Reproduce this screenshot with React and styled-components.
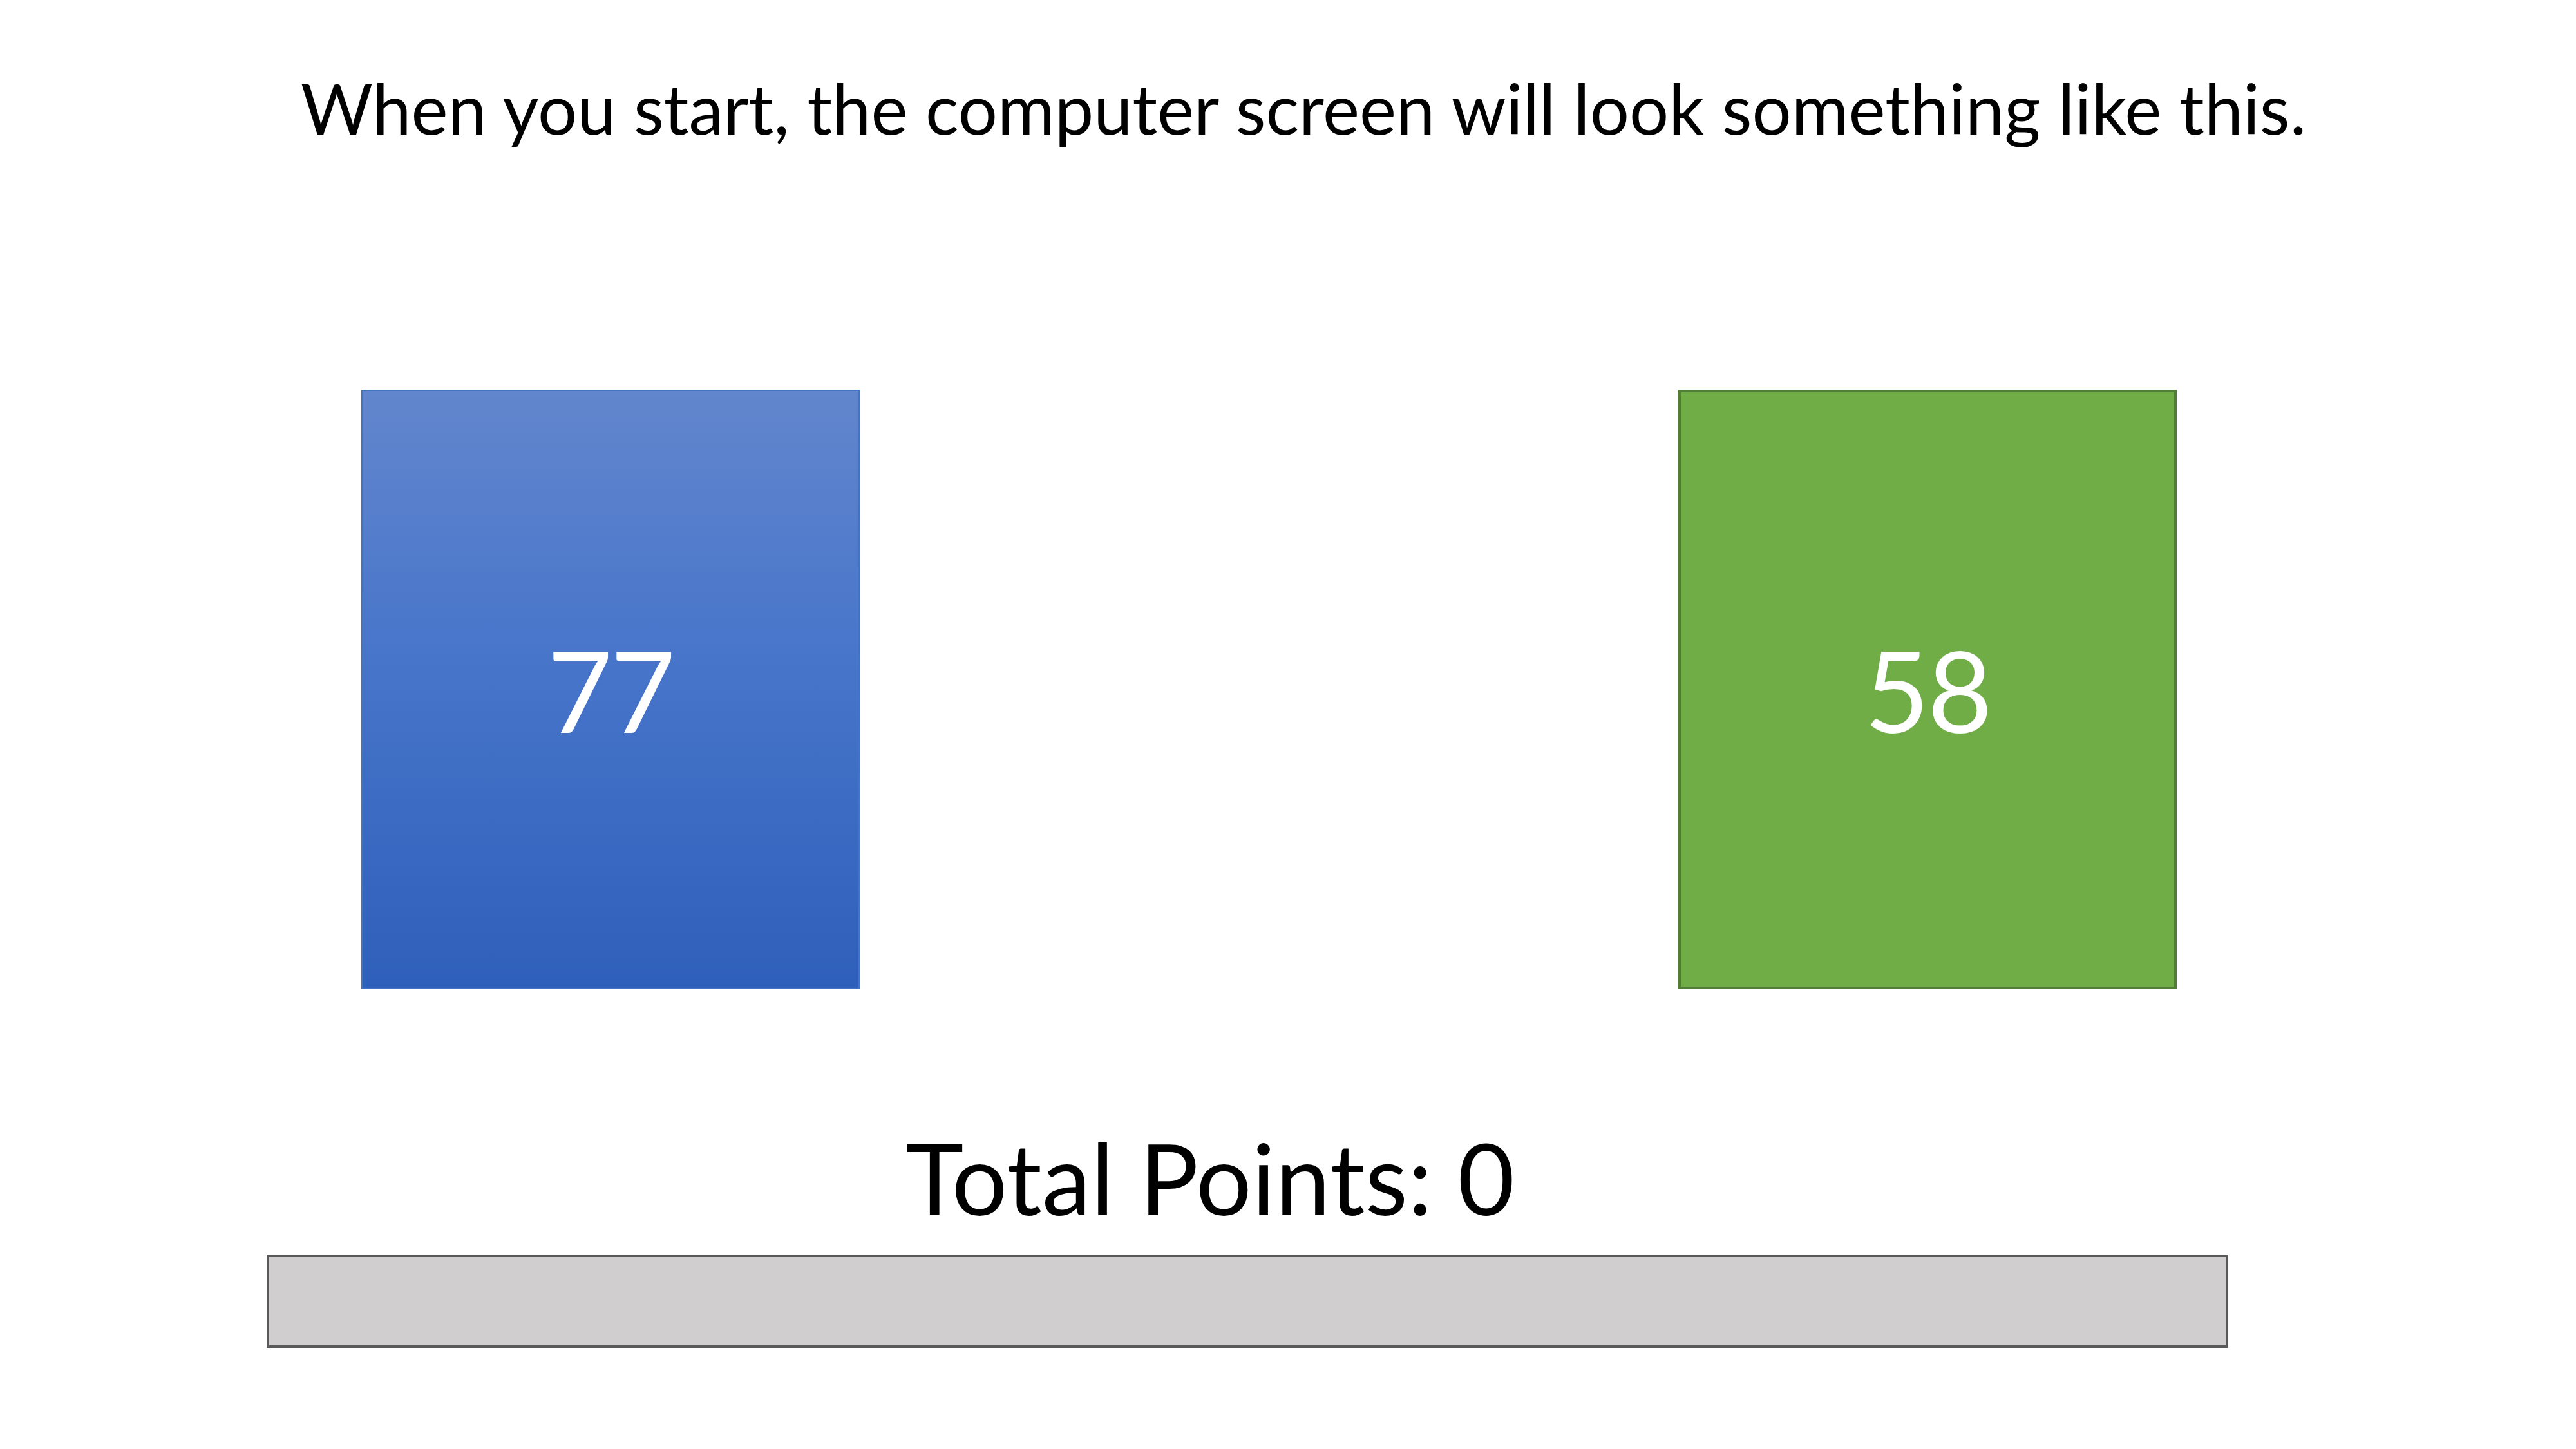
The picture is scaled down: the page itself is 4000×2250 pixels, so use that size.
import styled, { createGlobalStyle } from "styled-components";

const GlobalStyle = createGlobalStyle`
  html, body {
    margin: 0;
    padding: 0;
    background: #ffffff;
  }
  * {
    box-sizing: border-box;
  }
`;

function App() {
  return (
    <Slide>
      <GlobalStyle />
      <Title>When you start, the computer screen will look something like this.</Title>
      <CardRow>
        <Card $variant="blue">77</Card>
        <Card $variant="green">58</Card>
      </CardRow>
      <TotalText>Total Points: 0</TotalText>
      <ProgressBar />
    </Slide>
  );
}

export default App;

const Slide = styled.div`
  width: 4000px;
  height: 2250px;
  background: #ffffff;
  display: flex;
  flex-direction: column;
  font-family: Lato, "Open Sans", sans-serif;
  color: #000000;
`;

const Title = styled.h1`
  margin: 113px 0 0 467px;
  height: 108px;
  font-size: 108px;
  line-height: 1;
  font-weight: 400;
  white-space: nowrap;
`;

const CardRow = styled.div`
  display: flex;
  gap: 1271px;
  margin: 384px 0 0 561px;
`;

const Card = styled.div`
  width: 774px;
  height: 931px;
  display: flex;
  align-items: center;
  justify-content: center;
  color: #ffffff;
  font-size: 174px;
  letter-spacing: -3px;
  line-height: 1;
  background: ${(p) =>
    p.$variant === "blue"
      ? "linear-gradient(180deg, #6286cd 0%, #4775ca 45%, #2e5fba 100%)"
      : "#70ad47"};
  border: ${(p) =>
    p.$variant === "blue" ? "2px solid #4472c4" : "4px solid #507e32"};
`;

const TotalText = styled.div`
  margin: 216px 0 0 1406px;
  height: 153px;
  font-size: 153px;
  line-height: 1;
  white-space: nowrap;
`;

const ProgressBar = styled.div`
  margin: 43px 0 0 414px;
  width: 3046px;
  height: 145px;
  background: #d0cecf;
  border: 4px solid #595959;
`;
